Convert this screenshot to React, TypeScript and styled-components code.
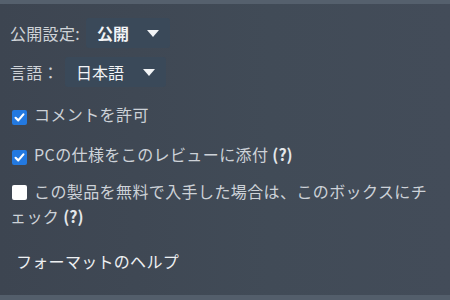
import React from 'react'
import styled, { createGlobalStyle } from 'styled-components'

const GlobalStyle = createGlobalStyle`
  html, body {
    margin: 0;
    padding: 0;
    background: #3e4652;
  }
  body {
    font-family: 'Noto Sans CJK JP', 'Noto Sans', sans-serif;
  }
`

const Panel = styled.div`
  width: 450px;
  height: 300px;
  box-sizing: border-box;
  background: linear-gradient(90deg, #3d4551 0%, #414b57 60%, #434c59 100%);
  border-top: 4px solid #55606d;
  border-bottom: 5px solid #535e6b;
  padding: 14px 10px 0 10px;
  display: flex;
  flex-direction: column;
`

const SettingRow = styled.div<{ gap: number }>`
  display: flex;
  align-items: center;
  height: 30px;
  margin-bottom: 9px;
  gap: ${(p) => p.gap}px;
`

const Label = styled.span`
  color: #cfd3d8;
  font-size: 16px;
  letter-spacing: 0.3px;
`

const Select = styled.div<{ width: number; bold?: boolean }>`
  width: ${(p) => p.width}px;
  height: 30px;
  box-sizing: border-box;
  background: #3a4959;
  border-radius: 3px;
  display: flex;
  align-items: center;
  justify-content: space-between;
  padding: 0 11px 0 11px;
  color: #f2f4f6;
  font-size: 16px;
  font-weight: ${(p) => (p.bold ? 700 : 400)};
`

const Arrow = styled.svg`
  width: 12px;
  height: 7px;
  flex-shrink: 0;
`

const CheckRow = styled.label<{ top: number }>`
  display: block;
  margin-top: ${(p) => p.top}px;
  color: #cdd2d8;
  font-size: 16px;
  letter-spacing: 0.4px;
  line-height: 25px;
  width: 430px;
`

const Box = styled.span<{ checked?: boolean }>`
  display: inline-flex;
  align-items: center;
  justify-content: center;
  width: 15px;
  height: 15px;
  box-sizing: border-box;
  margin: 0 7px 0 2px;
  vertical-align: -2px;
  border-radius: 2px;
  background: ${(p) => (p.checked ? '#2379e0' : '#ffffff')};
`

const Hint = styled.b`
  color: #e4e7ea;
  font-weight: 700;
  letter-spacing: 0;
  margin-left: 4px;
`

const Help = styled.div`
  margin-top: 20px;
  padding-left: 6px;
  color: #eef0f2;
  font-size: 16px;
  font-weight: 400;
  line-height: 25px;
  letter-spacing: 0.3px;
`

const DownArrow = () => (
  <Arrow viewBox="0 0 12 7">
    <path d="M0 0 H12 L6 7 Z" fill="#f2f4f6" />
  </Arrow>
)

const Check = ({ checked }: { checked?: boolean }) => (
  <Box checked={checked}>
    {checked && (
      <svg width="11" height="11" viewBox="0 0 11 11">
        <path
          d="M1.6 5.8 L4.3 8.4 L9.4 2.4"
          fill="none"
          stroke="#ffffff"
          strokeWidth="2.2"
          strokeLinecap="round"
          strokeLinejoin="round"
        />
      </svg>
    )}
  </Box>
)

export default function App() {
  return (
    <>
      <GlobalStyle />
      <Panel>
        <SettingRow gap={6}>
          <Label>公開設定:</Label>
          <Select width={84} bold>
            公開
            <DownArrow />
          </Select>
        </SettingRow>
        <SettingRow gap={6}>
          <Label>言語：</Label>
          <Select width={101}>
            日本語
            <DownArrow />
          </Select>
        </SettingRow>
        <CheckRow top={6}>
          <Check checked />
          コメントを許可
        </CheckRow>
        <CheckRow top={15}>
          <Check checked />
          PCの仕様をこのレビューに添付<Hint>(?)</Hint>
        </CheckRow>
        <CheckRow top={12}>
          <Check />
          この製品を無料で入手した場合は、このボックスにチェック<Hint>(?)</Hint>
        </CheckRow>
        <Help>フォーマットのヘルプ</Help>
      </Panel>
    </>
  )
}
